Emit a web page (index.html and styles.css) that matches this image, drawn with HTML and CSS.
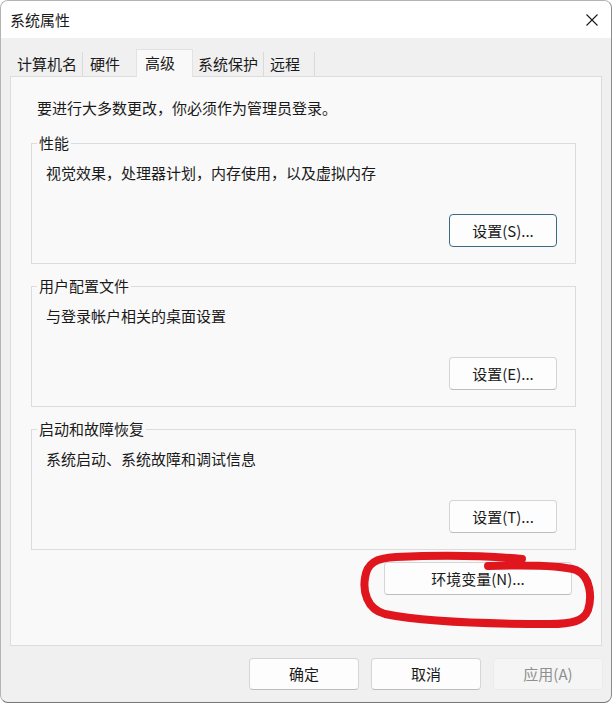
FILE: index.html
```html
<!DOCTYPE html>
<html lang="zh-CN">
<head>
<meta charset="utf-8">
<title>系统属性</title>
<link rel="stylesheet" href="styles.css">
</head>
<body>
<div class="window">
  <div class="titlebar">
    <span class="title">系统属性</span>
    <svg class="close" width="12" height="12" viewBox="0 0 12 12" aria-hidden="true"><path d="M0.5 0.5 L11.5 11.5 M11.5 0.5 L0.5 11.5" stroke="#1a1a1a" stroke-width="1.1" fill="none"/></svg>
  </div>
  <div class="client">
    <div class="tabs">
      <div class="tab t1">计算机名</div>
      <div class="tab t2">硬件</div>
      <div class="tab active t3">高级</div>
      <div class="tab t4">系统保护</div>
      <div class="tab t5">远程</div>
    </div>
    <div class="panel">
      <p class="intro">要进行大多数更改，你必须作为管理员登录。</p>
      <fieldset class="group">
        <legend>性能</legend>
        <div class="group-body">
          <p class="desc">视觉效果，处理器计划，内存使用，以及虚拟内存</p>
          <div class="actions"><button class="btn set default">设置(S)...</button></div>
        </div>
      </fieldset>
      <fieldset class="group">
        <legend>用户配置文件</legend>
        <div class="group-body">
          <p class="desc">与登录帐户相关的桌面设置</p>
          <div class="actions"><button class="btn set">设置(E)...</button></div>
        </div>
      </fieldset>
      <fieldset class="group">
        <legend>启动和故障恢复</legend>
        <div class="group-body">
          <p class="desc">系统启动、系统故障和调试信息</p>
          <div class="actions"><button class="btn set">设置(T)...</button></div>
        </div>
      </fieldset>
      <div class="env-row"><button class="btn env">环境变量(N)...</button></div>
    </div>
    <div class="footer">
      <button class="btn foot">确定</button>
      <button class="btn foot">取消</button>
      <button class="btn foot disabled" disabled>应用(A)</button>
    </div>
  </div>
  <svg class="annot" width="612" height="703" viewBox="0 0 612 703" aria-hidden="true">
    <path d="M488 566 C520 565 560 565 576 570 C591 576 592 598 588 610 C584 621 572 624 550 624 C480 624 420 621 385 614 C366 609 363 590 365 578 C367 563 376 558 396 557 C440 555 490 556 522 559" stroke="#e0161f" stroke-width="8" fill="none" stroke-linecap="round" stroke-linejoin="round"/>
  </svg>
</div>
</body>
</html>
```

FILE: styles.css
```css
html, body {
  margin: 0;
  padding: 0;
  background: #ffffff;
}

body {
  font-family: "Noto Sans CJK SC", "Noto Sans", sans-serif;
  font-size: 15px;
  color: #1a1a1a;
}

.window {
  position: relative;
  box-sizing: border-box;
  width: 612px;
  height: 703px;
  border: 1px solid #b4b4b4;
  border-right-color: #8a8a8a;
  border-bottom-color: #777777;
  border-radius: 8px;
  overflow: hidden;
  background: #f0f0f0;
  display: flex;
  flex-direction: column;
}

.titlebar {
  height: 37px;
  flex: none;
  background: #ffffff;
  display: flex;
  align-items: center;
  justify-content: space-between;
  padding: 0 13px 0 9px;
}

.title {
  line-height: 20px;
  color: #1a1a1a;
}

.close {
  display: block;
}

.client {
  flex: 1;
  padding: 11px 9px 0 9px;
  display: flex;
  flex-direction: column;
}

.tabs {
  display: flex;
  align-items: flex-end;
  height: 28px;
  margin-bottom: -1px;
  position: relative;
  z-index: 1;
}

.tab {
  box-sizing: border-box;
  height: 24px;
  line-height: 24px;
  padding-left: 7px;
  margin-bottom: 1px;
  white-space: nowrap;
  color: #1a1a1a;
}

.t1 { width: 73px; border-right: 1px solid #d9d9d9; }
.t2 { width: 55px; }
.t4 { width: 73px; border-right: 1px solid #d9d9d9; }
.t5 { width: 51px; padding-left: 6px; border-right: 1px solid #d9d9d9; }

.tab.active {
  width: 57px;
  height: 28px;
  margin: 0 -2px;
  padding: 1px 0 3px 8px;
  background: #f9f9f9;
  border: 1px solid #e2e2e2;
  border-bottom: none;
  position: relative;
  z-index: 2;
}

.panel {
  box-sizing: border-box;
  height: 570px;
  background: #f9f9f9;
  border: 1px solid #dcdcdc;
  padding: 21px 25px 0 20px;
}

.intro {
  margin: 0 0 15px 6px;
  line-height: 20px;
}

.group {
  margin: 0 0 12px 0;
  padding: 0;
  border: 1px solid #dcdcdc;
  min-width: 0;
}

.group legend {
  margin-left: 5px;
  padding: 0 2px;
  line-height: 20px;
  font-size: 15px;
  color: #1a1a1a;
}

.group-body {
  padding: 10px 18px 16px 14px;
}

.desc {
  margin: 0;
  line-height: 20px;
}

.actions {
  display: flex;
  justify-content: flex-end;
  margin-top: 31px;
}

.btn {
  box-sizing: border-box;
  font-family: "Noto Sans CJK SC", "Noto Sans", sans-serif;
  font-size: 15px;
  color: #1a1a1a;
  background: #fdfdfd;
  border: 1px solid #d5d5d5;
  border-bottom-color: #bdbdbd;
  border-radius: 4px;
  padding: 0;
  line-height: 20px;
}

.set {
  width: 108px;
  height: 33px;
}

.btn.default {
  border: 1px solid #3c6a84;
  background: #fdfdfd;
}

.env-row {
  display: flex;
  justify-content: flex-end;
  margin-top: 7px;
  padding-right: 4px;
}

.env {
  width: 188px;
  height: 33px;
}

.footer {
  display: flex;
  justify-content: flex-end;
  gap: 12px;
  margin-top: 12px;
  margin-right: -1px;
}

.foot {
  width: 110px;
  height: 32px;
}

.btn.disabled {
  background: #f5f5f5;
  border-color: #ebebeb;
  color: #8f8f8f;
}

.annot {
  position: absolute;
  left: -1px;
  top: -1px;
  pointer-events: none;
}
```
